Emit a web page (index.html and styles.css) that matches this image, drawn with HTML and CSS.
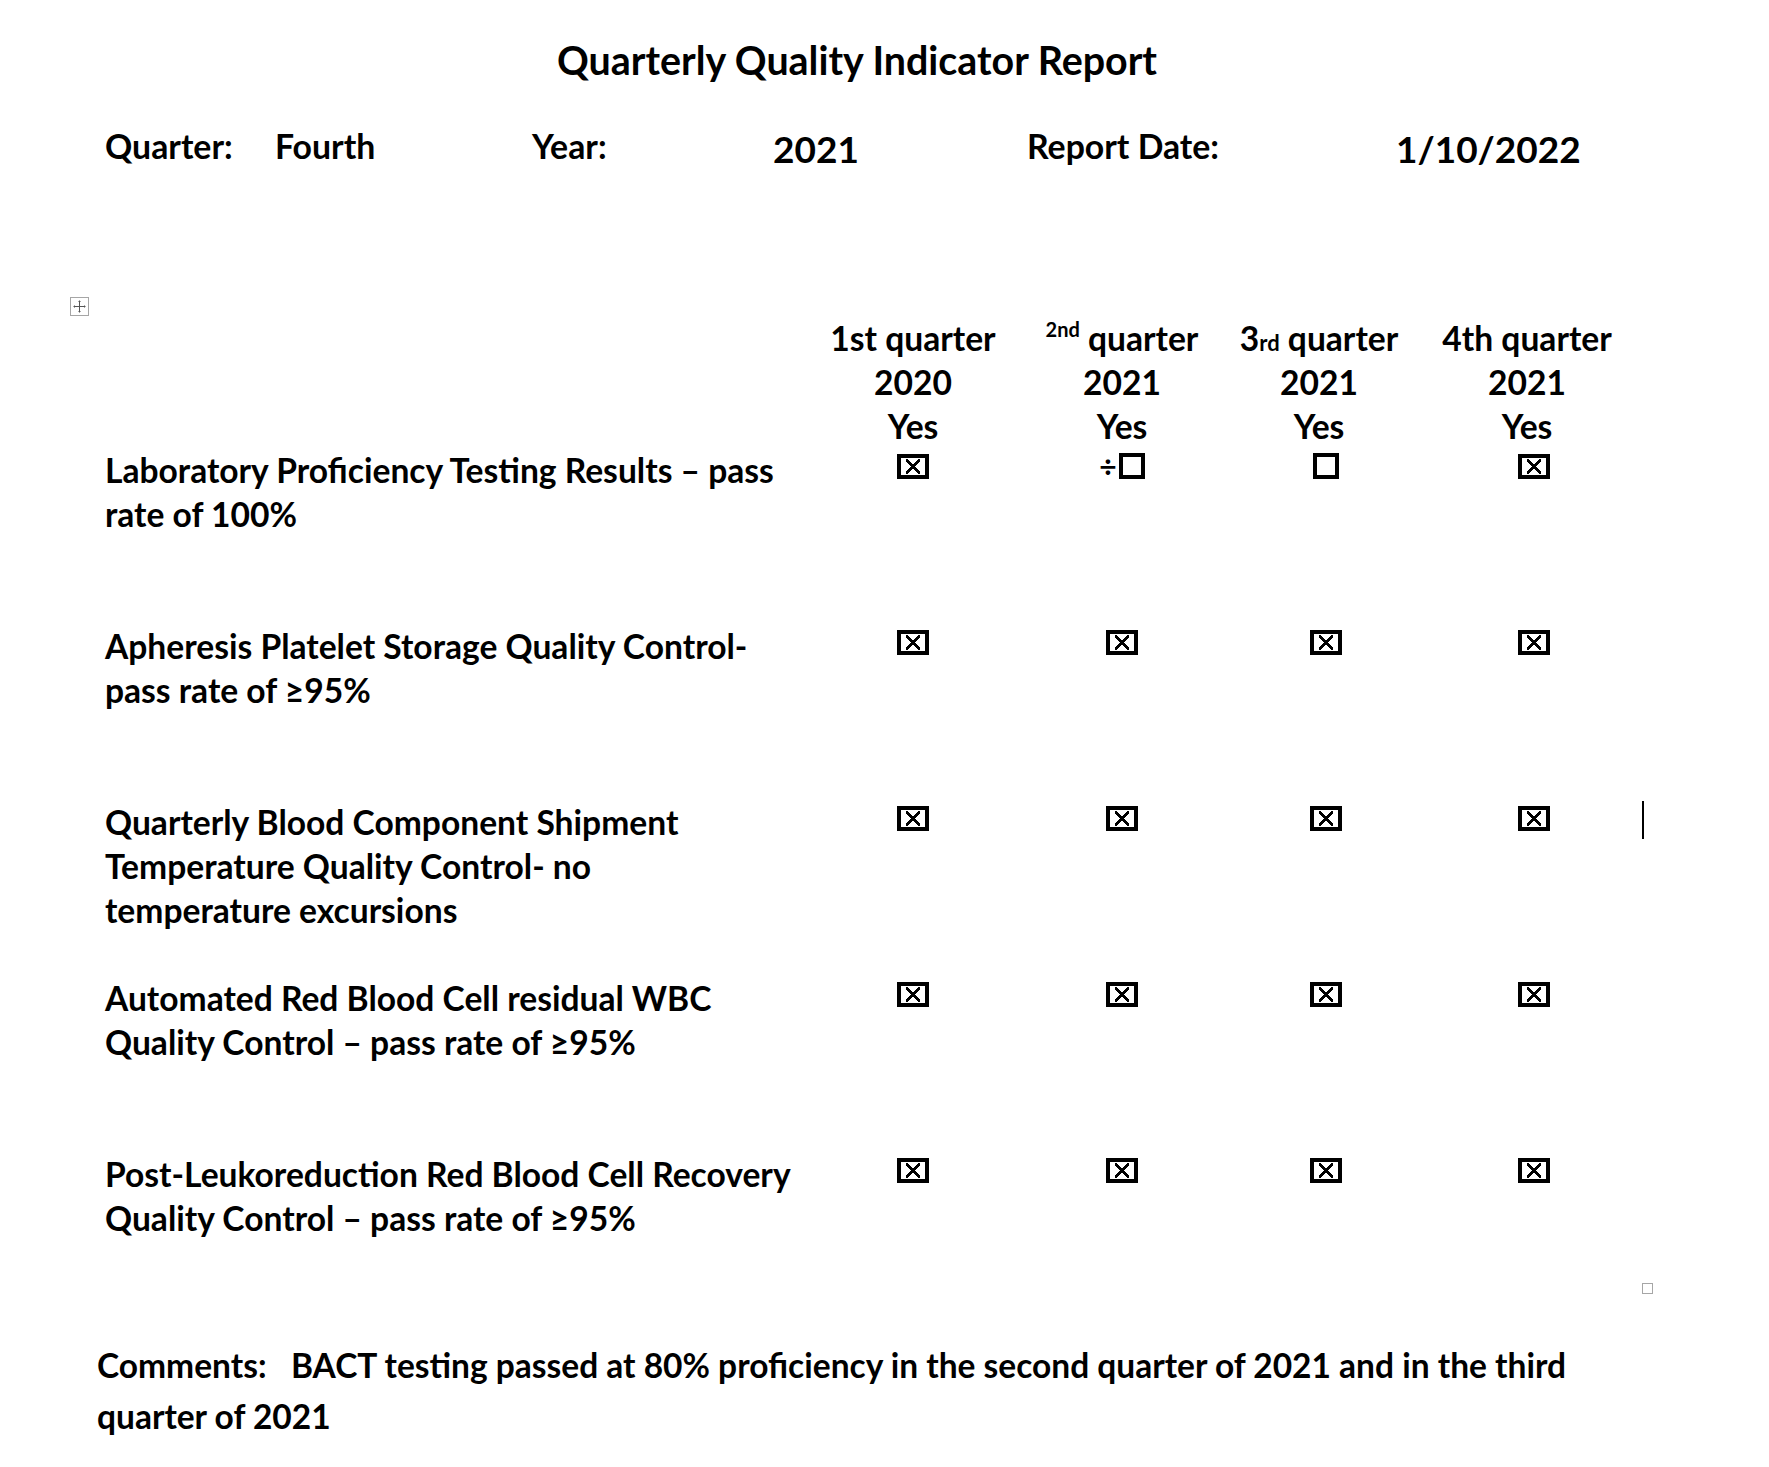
FILE: index.html
```html
<!DOCTYPE html>
<html lang="en">
<head>
<meta charset="utf-8">
<title>Quarterly Quality Indicator Report</title>
<link rel="stylesheet" href="styles.css">
</head>
<body>
<div class="page">
  <h1 class="title">Quarterly Quality Indicator Report</h1>

  <div class="meta">
    <span class="meta-label">Quarter:</span>
    <span class="meta-label">Fourth</span>
    <span class="meta-label">Year:</span>
    <span class="meta-value">2021</span>
    <span class="meta-label">Report Date:</span>
    <span class="meta-value">1/10/2022</span>
  </div>

  <div class="table-wrap">
    <span class="move-handle">
      <svg width="19" height="19" viewBox="0 0 19 19">
        <rect x="0.5" y="0.5" width="18" height="18" fill="#fff" stroke="#a6a6a6"/>
        <path d="M9.5 3.5v12M3.5 9.5h12" stroke="#555" stroke-width="1"/>
        <path d="M8.5 4.5h2M8.5 14.5h2M4.5 8.5v2M14.5 8.5v2" stroke="#555" stroke-width="1"/>
      </svg>
    </span>

    <div class="grid">
      <div class="corner"></div>
      <div class="head">1st quarter<br>2020<br>Yes</div>
      <div class="head"><sup class="sup">2nd</sup> quarter<br>2021<br>Yes</div>
      <div class="head">3<span class="rd">rd</span> quarter<br>2021<br>Yes</div>
      <div class="head">4th quarter<br>2021<br>Yes</div>

      <div class="label">Laboratory Proficiency Testing Results – pass<br>rate of 100%</div>
      <div class="cell"><span class="box checked"></span></div>
      <div class="cell"><span class="div-sign">÷</span><span class="box empty"></span></div>
      <div class="cell shifted"><span class="box empty"></span></div>
      <div class="cell shifted"><span class="box checked"></span></div>

      <div class="label">Apheresis Platelet Storage Quality Control-<br>pass rate of ≥95%</div>
      <div class="cell"><span class="box checked"></span></div>
      <div class="cell"><span class="box checked"></span></div>
      <div class="cell shifted"><span class="box checked"></span></div>
      <div class="cell shifted"><span class="box checked"></span></div>

      <div class="label">Quarterly Blood Component Shipment<br>Temperature Quality Control- no<br>temperature excursions</div>
      <div class="cell"><span class="box checked"></span></div>
      <div class="cell"><span class="box checked"></span></div>
      <div class="cell shifted"><span class="box checked"></span></div>
      <div class="cell shifted"><span class="box checked"></span><span class="caret"></span></div>

      <div class="label">Automated Red Blood Cell residual WBC<br>Quality Control – pass rate of ≥95%</div>
      <div class="cell"><span class="box checked"></span></div>
      <div class="cell"><span class="box checked"></span></div>
      <div class="cell shifted"><span class="box checked"></span></div>
      <div class="cell shifted"><span class="box checked"></span></div>

      <div class="label">Post-Leukoreduction Red Blood Cell Recovery<br>Quality Control – pass rate of ≥95%</div>
      <div class="cell"><span class="box checked"></span></div>
      <div class="cell"><span class="box checked"></span></div>
      <div class="cell shifted"><span class="box checked"></span></div>
      <div class="cell shifted"><span class="box checked"></span></div>
    </div>
    <span class="end-mark"></span>
  </div>

  <p class="comments">Comments:&nbsp;&nbsp; BACT testing passed at 80% proficiency in the second quarter of 2021 and in the third<br>quarter of 2021</p>
</div>
</body>
</html>
```

FILE: styles.css
```css
html, body {
  margin: 0;
  padding: 0;
  background: #fff;
}

body {
  font-family: Lato, "Open Sans", "Liberation Sans", sans-serif;
  font-weight: 700;
  color: #000;
  width: 1769px;
  height: 1467px;
  overflow: hidden;
}

.page {
  padding-top: 38px;
  position: relative;
}

.title {
  margin: 0;
  font-size: 39.4px;
  line-height: 44px;
  font-weight: 700;
  text-align: center;
  width: 1714px;
}

.meta {
  margin-top: 42px;
  padding-left: 105px;
  display: grid;
  grid-template-columns: 170px 257px 241px 254px 369px auto;
  align-items: center;
  height: 44px;
}

.meta-label {
  font-size: 33.8px;
  line-height: 44px;
}

.meta-value {
  font-size: 37px;
  line-height: 44px;
  position: relative;
  top: 3px;
}

.table-wrap {
  position: relative;
  margin-top: 148px;
  padding-left: 105px;
}

.move-handle {
  position: absolute;
  left: 70px;
  top: -19px;
  width: 19px;
  height: 19px;
  line-height: 0;
}

.grid {
  display: grid;
  grid-template-columns: 703px 210px 208px 186px 230px;
  font-size: 33.6px;
  line-height: 44px;
}

.corner {
  height: 132px;
}

.head {
  text-align: center;
  white-space: nowrap;
  height: 132px;
}

.sup {
  font-size: 20px;
  vertical-align: baseline;
  position: relative;
  top: -14px;
  line-height: 1;
}

.rd {
  font-size: 22px;
  line-height: 1;
}

.label {
  height: 176px;
  white-space: nowrap;
}

.cell {
  height: 176px;
  text-align: center;
  position: relative;
}

.cell.shifted {
  padding-left: 13px;
}

.box {
  display: inline-block;
  box-sizing: border-box;
  border: 4px solid #000;
  vertical-align: middle;
  position: relative;
  top: -8px;
}

.box.checked {
  width: 32px;
  height: 25px;
  background:
    linear-gradient(to top right, transparent calc(50% - 1.4px), #000 calc(50% - 1.4px), #000 calc(50% + 1.4px), transparent calc(50% + 1.4px)) center / 14px 15px no-repeat,
    linear-gradient(to bottom right, transparent calc(50% - 1.4px), #000 calc(50% - 1.4px), #000 calc(50% + 1.4px), transparent calc(50% + 1.4px)) center / 14px 15px no-repeat;
}

.box.empty {
  width: 26px;
  height: 26px;
}

.div-sign {
  font-size: 30px;
  vertical-align: middle;
  position: relative;
  top: -8px;
  margin-right: 2px;
}

.caret {
  position: absolute;
  left: 230px;
  top: 1px;
  width: 2px;
  height: 38px;
  background: #000;
}

.end-mark {
  position: absolute;
  left: 1642px;
  bottom: 34px;
  width: 11px;
  height: 11px;
  box-sizing: border-box;
  border: 1px solid #a6a6a6;
}

.comments {
  margin: 12px 0 0;
  padding-left: 97px;
  font-size: 33.5px;
  line-height: 51px;
  white-space: nowrap;
}
```
